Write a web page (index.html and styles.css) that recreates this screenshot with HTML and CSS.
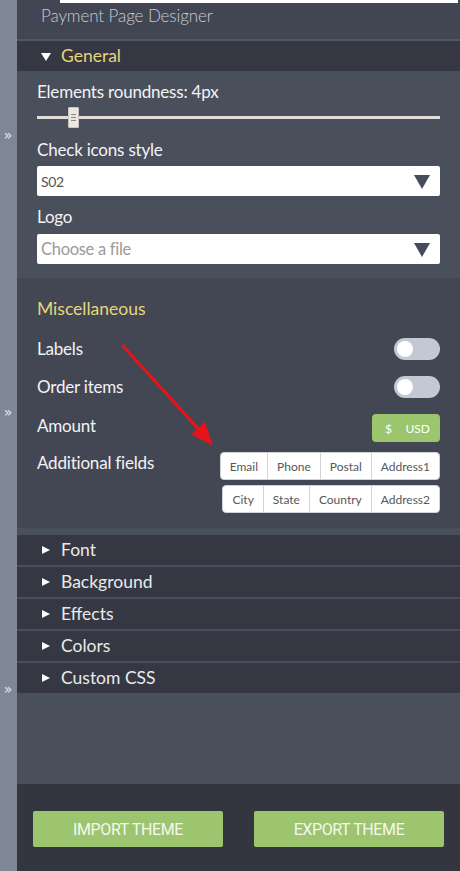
FILE: index.html
```html
<!DOCTYPE html>
<html>
<head>
<meta charset="utf-8">
<link rel="stylesheet" href="styles.css">
</head>
<body>
<div class="page">
  <div class="rail">
    <span class="chev">»</span>
    <span class="chev">»</span>
    <span class="chev">»</span>
  </div>
  <div class="panel">
    <div class="topline"></div>
    <div class="title">Payment Page Designer</div>
    <div class="sec-head open"><span class="tri-down"></span><span class="sec-name yellow">General</span></div>
    <div class="general">
      <div class="label">Elements roundness: 4px</div>
      <div class="slider"><div class="track"></div><div class="thumb"><i></i><i></i><i></i></div></div>
      <div class="label mt8">Check icons style</div>
      <div class="select"><span class="val">S02</span><span class="caret"></span></div>
      <div class="label mt10">Logo</div>
      <div class="select mt6"><span class="val placeholder">Choose a file</span><span class="caret"></span></div>
    </div>
    <div class="misc">
      <div class="misc-title">Miscellaneous</div>
      <div class="row r-labels"><span class="label">Labels</span><span class="toggle"><span class="knob"></span></span></div>
      <div class="row r-order"><span class="label">Order items</span><span class="toggle"><span class="knob"></span></span></div>
      <div class="row r-amount"><span class="label lift">Amount</span><span class="amount"><span>$</span><span>USD</span></span></div>
      <div class="row r-fields">
        <span class="label">Additional fields</span>
        <div class="groups">
          <div class="group"><span class="g-btn">Email</span><span class="g-btn">Phone</span><span class="g-btn">Postal</span><span class="g-btn">Address1</span></div>
          <div class="group"><span class="g-btn">City</span><span class="g-btn">State</span><span class="g-btn">Country</span><span class="g-btn">Address2</span></div>
        </div>
      </div>
    </div>
    <div class="gap-band"></div>
    <div class="sec-head"><span class="tri-right"></span><span class="sec-name">Font</span></div>
    <div class="sec-head"><span class="tri-right"></span><span class="sec-name">Background</span></div>
    <div class="sec-head"><span class="tri-right"></span><span class="sec-name">Effects</span></div>
    <div class="sec-head"><span class="tri-right"></span><span class="sec-name">Colors</span></div>
    <div class="sec-head"><span class="tri-right"></span><span class="sec-name">Custom CSS</span></div>
    <div class="spacer"></div>
    <div class="footer">
      <span class="btn">IMPORT THEME</span>
      <span class="btn">EXPORT THEME</span>
    </div>
    <svg class="arrow" width="120" height="120" viewBox="0 0 120 120">
      <line x1="6" y1="4" x2="86" y2="92" stroke="#e3141a" stroke-width="3.2" stroke-linecap="round"/>
      <polygon points="96,104 74,92 88,80" fill="#e3141a"/>
    </svg>
  </div>
</div>
</body>
</html>
```
FILE: styles.css
```css
* { box-sizing: border-box; }
html, body { margin: 0; padding: 0; }
body {
  width: 460px;
  height: 871px;
  overflow: hidden;
  font-family: Lato, "Open Sans", sans-serif;
  background: #33363f;
}
.page {
  display: flex;
  width: 460px;
  height: 871px;
}
.rail {
  width: 17px;
  background: #7f8696;
  display: flex;
  flex-direction: column;
  align-items: center;
  padding-top: 127px;
  gap: 261px;
}
.chev {
  color: #e4e7ee;
  font-size: 14px;
  line-height: 16px;
  font-family: "DejaVu Sans", sans-serif;
  margin-left: -1px;
}
.panel {
  flex: 1;
  display: flex;
  flex-direction: column;
  position: relative;
  background: #4a4f5c;
}
.topline {
  position: absolute;
  top: 0;
  left: 43px;
  width: 398px;
  height: 3px;
  background: #ffffff;
}
.title {
  height: 41px;
  background: #424653;
  border-bottom: 2px solid #525664;
  padding: 4px 0 0 24px;
  color: #c9cbd1;
  font-weight: 300;
  font-size: 17px;
  line-height: 24px;
  letter-spacing: -0.1px;
}
.sec-head {
  height: 32px;
  background: #353842;
  border-bottom: 2px solid #4b4f5b;
  display: flex;
  align-items: center;
  padding-left: 24px;
  color: #e8eaee;
}
.sec-head.open {
  height: 30px;
  border-bottom: 0;
}
.sec-name {
  font-size: 17.5px;
  line-height: 20px;
  margin-left: 10px;
}
.yellow { color: #e6d57a; }
.tri-down {
  width: 0; height: 0;
  border-left: 5px solid transparent;
  border-right: 5px solid transparent;
  border-top: 8px solid #ffffff;
  margin-top: 1px;
}
.tri-right {
  width: 0; height: 0;
  border-top: 4.5px solid transparent;
  border-bottom: 4.5px solid transparent;
  border-left: 8px solid #ffffff;
  margin-left: 1px;
  margin-right: 1px;
}
.general {
  background: #4a4f5c;
  padding: 10px 20px 14px 20px;
  display: flex;
  flex-direction: column;
}
.label {
  color: #f2f3f5;
  font-size: 17px;
  line-height: 22px;
  letter-spacing: -0.2px;
}
.label.lift { margin-top: -5px; }
.mt8 { margin-top: 8px; }
.mt10 { margin-top: 10px; }
.mt6 { margin-top: 6px !important; }
.slider {
  height: 28px;
  position: relative;
  display: flex;
  align-items: center;
}
.track {
  width: 100%;
  height: 3px;
  background: #e2ddd8;
}
.thumb {
  position: absolute;
  left: 31px;
  top: 4px;
  width: 11px;
  height: 21px;
  background: #ebe7e3;
  border: 1px solid #c9c4bf;
  border-radius: 1px;
  display: flex;
  flex-direction: column;
  align-items: center;
  justify-content: center;
  gap: 2px;
}
.thumb i {
  display: block;
  width: 5px;
  height: 1px;
  background: #8c8a88;
}
.select {
  margin-top: 5px;
  height: 30px;
  background: #ffffff;
  border-radius: 2px;
  display: flex;
  align-items: center;
  justify-content: space-between;
  padding: 0 10px 0 4px;
}
.val {
  color: #555555;
  font-size: 14px;
  letter-spacing: -0.3px;
}
.val.placeholder {
  color: #9a9a9a;
  font-size: 16.5px;
}
.caret {
  width: 0; height: 0;
  border-left: 8.5px solid transparent;
  border-right: 8.5px solid transparent;
  border-top: 14px solid #474c58;
  margin-top: 2px;
}
.misc {
  background: #434754;
  padding: 20px 20px 15px 20px;
  display: flex;
  flex-direction: column;
}
.misc-title {
  color: #e6d57a;
  font-size: 17.5px;
  line-height: 22px;
  margin-bottom: 18px;
}
.row {
  display: flex;
  justify-content: space-between;
  align-items: center;
}
.r-order, .r-amount { margin-top: 16px; }
.r-fields {
  margin-top: 10px;
  align-items: flex-start;
}
.toggle {
  width: 46px;
  height: 22px;
  border-radius: 11px;
  background: #c2c9d5;
  display: flex;
  align-items: center;
  padding-left: 3px;
}
.knob {
  width: 16px;
  height: 16px;
  border-radius: 50%;
  background: #ffffff;
}
.amount {
  width: 68px;
  height: 28px;
  border-radius: 4px;
  background: #9cc66e;
  color: #ffffff;
  font-size: 12px;
  display: flex;
  align-items: center;
  justify-content: space-between;
  padding: 0 10px 0 13px;
}
.groups {
  display: flex;
  flex-direction: column;
  align-items: flex-end;
  gap: 5px;
}
.group {
  display: flex;
  background: #ffffff;
  border: 1px solid #cfd2d6;
  border-radius: 4px;
  height: 28px;
}
.g-btn {
  display: flex;
  align-items: center;
  padding: 0 9px;
  font-size: 12px;
  color: #575757;
  border-left: 1px solid #cfd2d6;
}
.g-btn:first-child { border-left: 0; }
.gap-band {
  height: 7px;
  background: #4a4f5c;
}
.spacer {
  flex: 1;
  background: #4a4f5c;
}
.footer {
  height: 87px;
  background: #33363f;
  display: flex;
  justify-content: space-between;
  padding: 27px 16px 0 16px;
}
.btn {
  width: 190px;
  height: 36px;
  border-radius: 2px;
  background: #9dc56f;
  color: #f4f8ee;
  font-family: Roboto, sans-serif;
  font-size: 16px;
  letter-spacing: -0.4px;
  display: flex;
  align-items: center;
  justify-content: center;
}
.arrow {
  position: absolute;
  left: 100px;
  top: 342px;
}
```
